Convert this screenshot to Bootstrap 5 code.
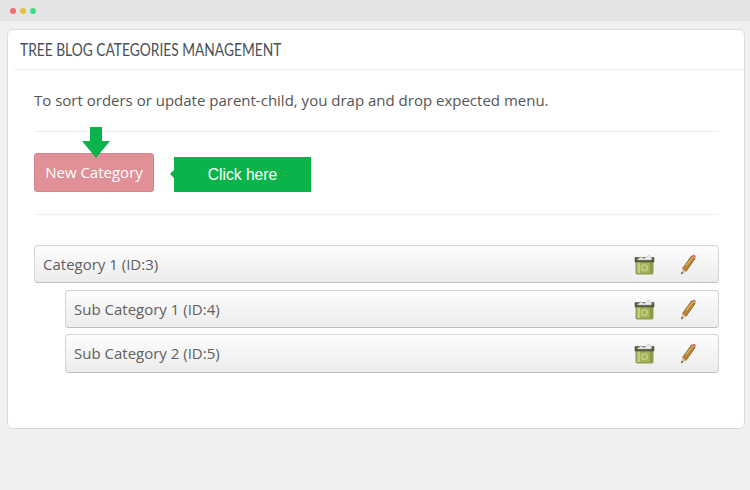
<!DOCTYPE html>
<html lang="en">
<head>
    <meta charset="UTF-8">
    <title>Tree Blog Categories Management</title>
    <link href="https://cdn.jsdelivr.net/npm/bootstrap@5.3.3/dist/css/bootstrap.min.css" rel="stylesheet">
    <style>
        body {
            background: #eff0f2;
            font-family: "Open Sans", sans-serif;
            color: #555;
            height: 490px;
            overflow: hidden;
        }
        .top-strip {
            height: 21px;
            background: #e4e4e4;
            padding-left: 10px;
        }
        .top-dot {
            width: 6px;
            height: 6px;
            border-radius: 50%;
        }
        .panel-box {
            margin: 8px 5px 0 7px;
            height: 400px;
            background: #fff;
            border: 1px solid #d9dbde;
            border-radius: 6px;
        }
        .panel-head {
            height: 40px;
            margin-left: 6px;
            padding-left: 6px;
            border-bottom: 1px solid #eee;
            font-family: "Lato", sans-serif;
            font-size: 17px;
            color: #4a4f55;
            line-height: 39px;
        }
        .panel-head span {
            display: inline-block;
            transform: scaleX(0.81);
            transform-origin: left center;
            white-space: nowrap;
        }
        .panel-main {
            padding: 0 25px 0 26px;
        }
        .intro-line {
            font-size: 15px;
            height: 62px;
            line-height: 61px;
            border-bottom: 1px solid #eee;
        }
        .action-row {
            height: 83px;
            padding-top: 21px;
            border-bottom: 1px solid #eee;
        }
        .new-btn {
            width: 120px;
            height: 39px;
            padding: 0;
            font-size: 15px;
            color: #fff;
            background: #e09096;
            border: 1px solid #d5848b;
            border-radius: 3px;
        }
        .new-btn:hover {
            color: #fff;
            background: #e09096;
            border-color: #d5848b;
        }
        .btn-wrap {
            width: 120px;
            height: 39px;
        }
        .down-arrow {
            position: absolute;
            left: 48px;
            top: -26px;
        }
        .click-tag {
            width: 137px;
            height: 35px;
            margin-left: 20px;
            margin-top: 4px;
            background: #0bb44a;
            color: #fff;
            font-family: "Liberation Sans", sans-serif;
            font-size: 15.6px;
        }
        .click-tag::before {
            content: "";
            position: absolute;
            left: -4px;
            top: 13px;
            border-top: 4px solid transparent;
            border-bottom: 4px solid transparent;
            border-right: 4px solid #0bb44a;
        }
        .tree-list {
            margin-top: 30px;
        }
        .tree-row {
            height: 38px;
            margin-bottom: 7px;
            padding: 0 8px;
            font-size: 15px;
            color: #5f5f5f;
            background: linear-gradient(to bottom, #fdfdfd, #ececec);
            border: 1px solid #d4d4d4;
            border-bottom-color: #bdbdbd;
            border-radius: 4px;
        }
        .tree-row.sub-row {
            margin-left: 31px;
        }
        .tree-row.mid-row {
            margin-bottom: 6px;
        }
        .tree-row.last-row {
            height: 39px;
        }
        .row-icons {
            gap: 25px;
            margin-right: 13px;
        }
    </style>
</head>
<body>
    <div class="top-strip d-flex align-items-center gap-1">
        <span class="top-dot" style="background:#ee6b6e"></span>
        <span class="top-dot" style="background:#e6c040"></span>
        <span class="top-dot" style="background:#3ddc84"></span>
    </div>

    <div class="panel-box">
        <div class="panel-head"><span>TREE BLOG CATEGORIES MANAGEMENT</span></div>
        <div class="panel-main">
            <div class="intro-line">To sort orders or update parent-child, you drap and drop expected menu.</div>

            <div class="action-row d-flex align-items-start">
                <div class="btn-wrap position-relative">
                    <button class="btn new-btn" type="button">New Category</button>
                    <svg class="down-arrow" width="28" height="31" viewBox="0 0 28 31">
                        <path d="M8 0h12v14h8L14 31 0 14h8z" fill="#0bb44a"/>
                    </svg>
                </div>
                <div class="click-tag position-relative d-flex align-items-center justify-content-center">Click here</div>
            </div>

            <div class="tree-list">
                <div class="tree-row d-flex align-items-center justify-content-between">
                    <span>Category 1 (ID:3)</span>
                    <span class="row-icons d-flex align-items-center">
                        <svg width="21" height="21" viewBox="0 0 21 21"><use href="#binIcon"/></svg>
                        <svg width="17" height="21" viewBox="0 0 17 21"><use href="#pencilIcon"/></svg>
                    </span>
                </div>
                <div class="tree-row sub-row mid-row d-flex align-items-center justify-content-between">
                    <span>Sub Category 1 (ID:4)</span>
                    <span class="row-icons d-flex align-items-center">
                        <svg width="21" height="21" viewBox="0 0 21 21"><use href="#binIcon"/></svg>
                        <svg width="17" height="21" viewBox="0 0 17 21"><use href="#pencilIcon"/></svg>
                    </span>
                </div>
                <div class="tree-row sub-row last-row d-flex align-items-center justify-content-between">
                    <span>Sub Category 2 (ID:5)</span>
                    <span class="row-icons d-flex align-items-center">
                        <svg width="21" height="21" viewBox="0 0 21 21"><use href="#binIcon"/></svg>
                        <svg width="17" height="21" viewBox="0 0 17 21"><use href="#pencilIcon"/></svg>
                    </span>
                </div>
            </div>
        </div>
    </div>

    <!-- icon defs -->
    <svg width="0" height="0" class="position-absolute">
        <defs>
            <g id="binIcon">
                <path d="M2 7h17v12q0 1-1 1H3q-1 0-1-1z" fill="#a5b25a" stroke="#76813e" stroke-width=".8"/>
                <path d="M3.500 8h2.500v11H3.500z" fill="#c2cd7e"/>
                <path d="M16 8h2v11h-2z" fill="#8c9849"/>
                <circle cx="10.500" cy="13.700" r="2.800" fill="none" stroke="#c4cf8c" stroke-width="1.400"/>
                <path d="M1 3.500h19v4.500H1z" fill="#5a6344" stroke="#454d33" stroke-width=".6"/>
                <path d="M3 5.500l4-2.500 3 1.500 5-3.500 3 3.500-1 1.500H5z" fill="#ececec" stroke="#a0a0a0" stroke-width=".4"/>
            </g>
            <g id="pencilIcon">
                <path d="M2.500 14.500L11.500 1.800l3.700 2.600L6 17.500z" fill="#bd8233" stroke="#77532a" stroke-width=".7"/>
                <path d="M6 11.500l7.500-9" stroke="#dcae62" stroke-width="1.200" fill="none"/>
                <path d="M12.300 1.600l.4-.5q.8-.7 1.900 0t1.100 1.700l-.5 1z" fill="#cf5f5f"/>
                <path d="M2.500 14.500L6 17.500 1 20.500z" fill="#d8c09c"/>
                <path d="M1 20.500l.7-2.700 1.500 1.300z" fill="#4a4036"/>
            </g>
        </defs>
    </svg>

    <script src="https://cdn.jsdelivr.net/npm/bootstrap@5.3.3/dist/js/bootstrap.bundle.min.js"></script>
</body>
</html>
